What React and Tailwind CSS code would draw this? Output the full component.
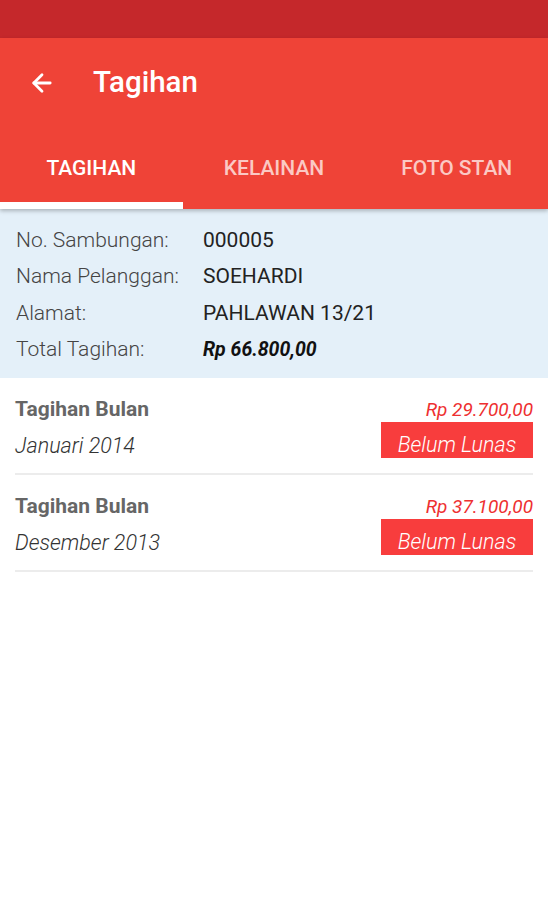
import { ArrowLeft } from "lucide-react";

const info = [
  { label: "No. Sambungan:", value: "000005" },
  { label: "Nama Pelanggan:", value: "SOEHARDI" },
  { label: "Alamat:", value: "PAHLAWAN 13/21" },
  { label: "Total Tagihan:", value: "Rp 66.800,00", bold: true },
];

const bills = [
  { month: "Januari 2014", amount: "Rp 29.700,00" },
  { month: "Desember 2013", amount: "Rp 37.100,00" },
];

const App = () => {
  return (
    <div
      className="w-[548px] h-[900px] bg-white flex flex-col"
      style={{ fontFamily: "Roboto, 'Liberation Sans', sans-serif" }}
    >
      {/* STATUS BAR */}
      <div className="h-[38px] bg-[#c5282b]" />

      {/* APP BAR + TABS */}
      <div className="bg-[#ef4337] shadow-[0_2px_4px_rgba(0,0,0,0.25)] relative z-10">
        <div className="h-[87px] flex items-center pl-[28px] pt-[2px]">
          <ArrowLeft size={28} strokeWidth={2.4} className="text-white" />
          <h1 className="ml-[37px] text-[29.5px] font-medium text-white">Tagihan</h1>
        </div>
        <div className="h-[84px] flex">
          {["TAGIHAN", "KELAINAN", "FOTO STAN"].map((tab, i) => (
            <div key={tab} className="w-[183px] flex flex-col">
              <div
                className={
                  "flex-1 flex items-center justify-center text-[21px] font-medium pt-[11px] " +
                  (i === 0 ? "text-white" : "text-[#fbc9c4]")
                }
              >
                {tab}
              </div>
              <div className={"h-[7px] " + (i === 0 ? "bg-white" : "")} />
            </div>
          ))}
        </div>
      </div>

      {/* INFO PANEL */}
      <div className="bg-[#e4f0f9] pl-[16px] pt-[13px] pb-[10px]">
        {info.map((row) => (
          <div key={row.label} className="h-[36.5px] flex items-center text-[21px]">
            <span className="w-[187px] font-light text-[#444]">{row.label}</span>
            <span
              className={
                row.bold ? "font-bold italic text-[#111] text-[19.5px]" : "text-[#222]"
              }
            >
              {row.value}
            </span>
          </div>
        ))}
      </div>

      {/* BILL LIST */}
      <div className="px-[15px]">
        {bills.map((b) => (
          <div key={b.month} className="flex justify-between border-b-2 border-[#ececec] pt-[16px] pb-[9px]">
            <div className="flex flex-col">
              <span className="h-[30px] flex items-center text-[21px] font-bold text-[#666] pt-[2px]">
                Tagihan Bulan
              </span>
              <span className="h-[40px] flex items-center text-[21.5px] italic font-light text-[#333] pt-[4px]">
                {b.month}
              </span>
            </div>
            <div className="flex flex-col items-end">
              <span className="h-[30px] flex items-center text-[19px] italic text-[#ee3030] pt-[2px]">
                {b.amount}
              </span>
              <span className="w-[152px] h-[36px] -mt-[2px] flex items-center justify-center bg-[#f83d3d] text-white text-[21.5px] leading-none italic font-light pt-[10px]">
                Belum Lunas
              </span>
            </div>
          </div>
        ))}
      </div>
    </div>
  );
};

export default App;
